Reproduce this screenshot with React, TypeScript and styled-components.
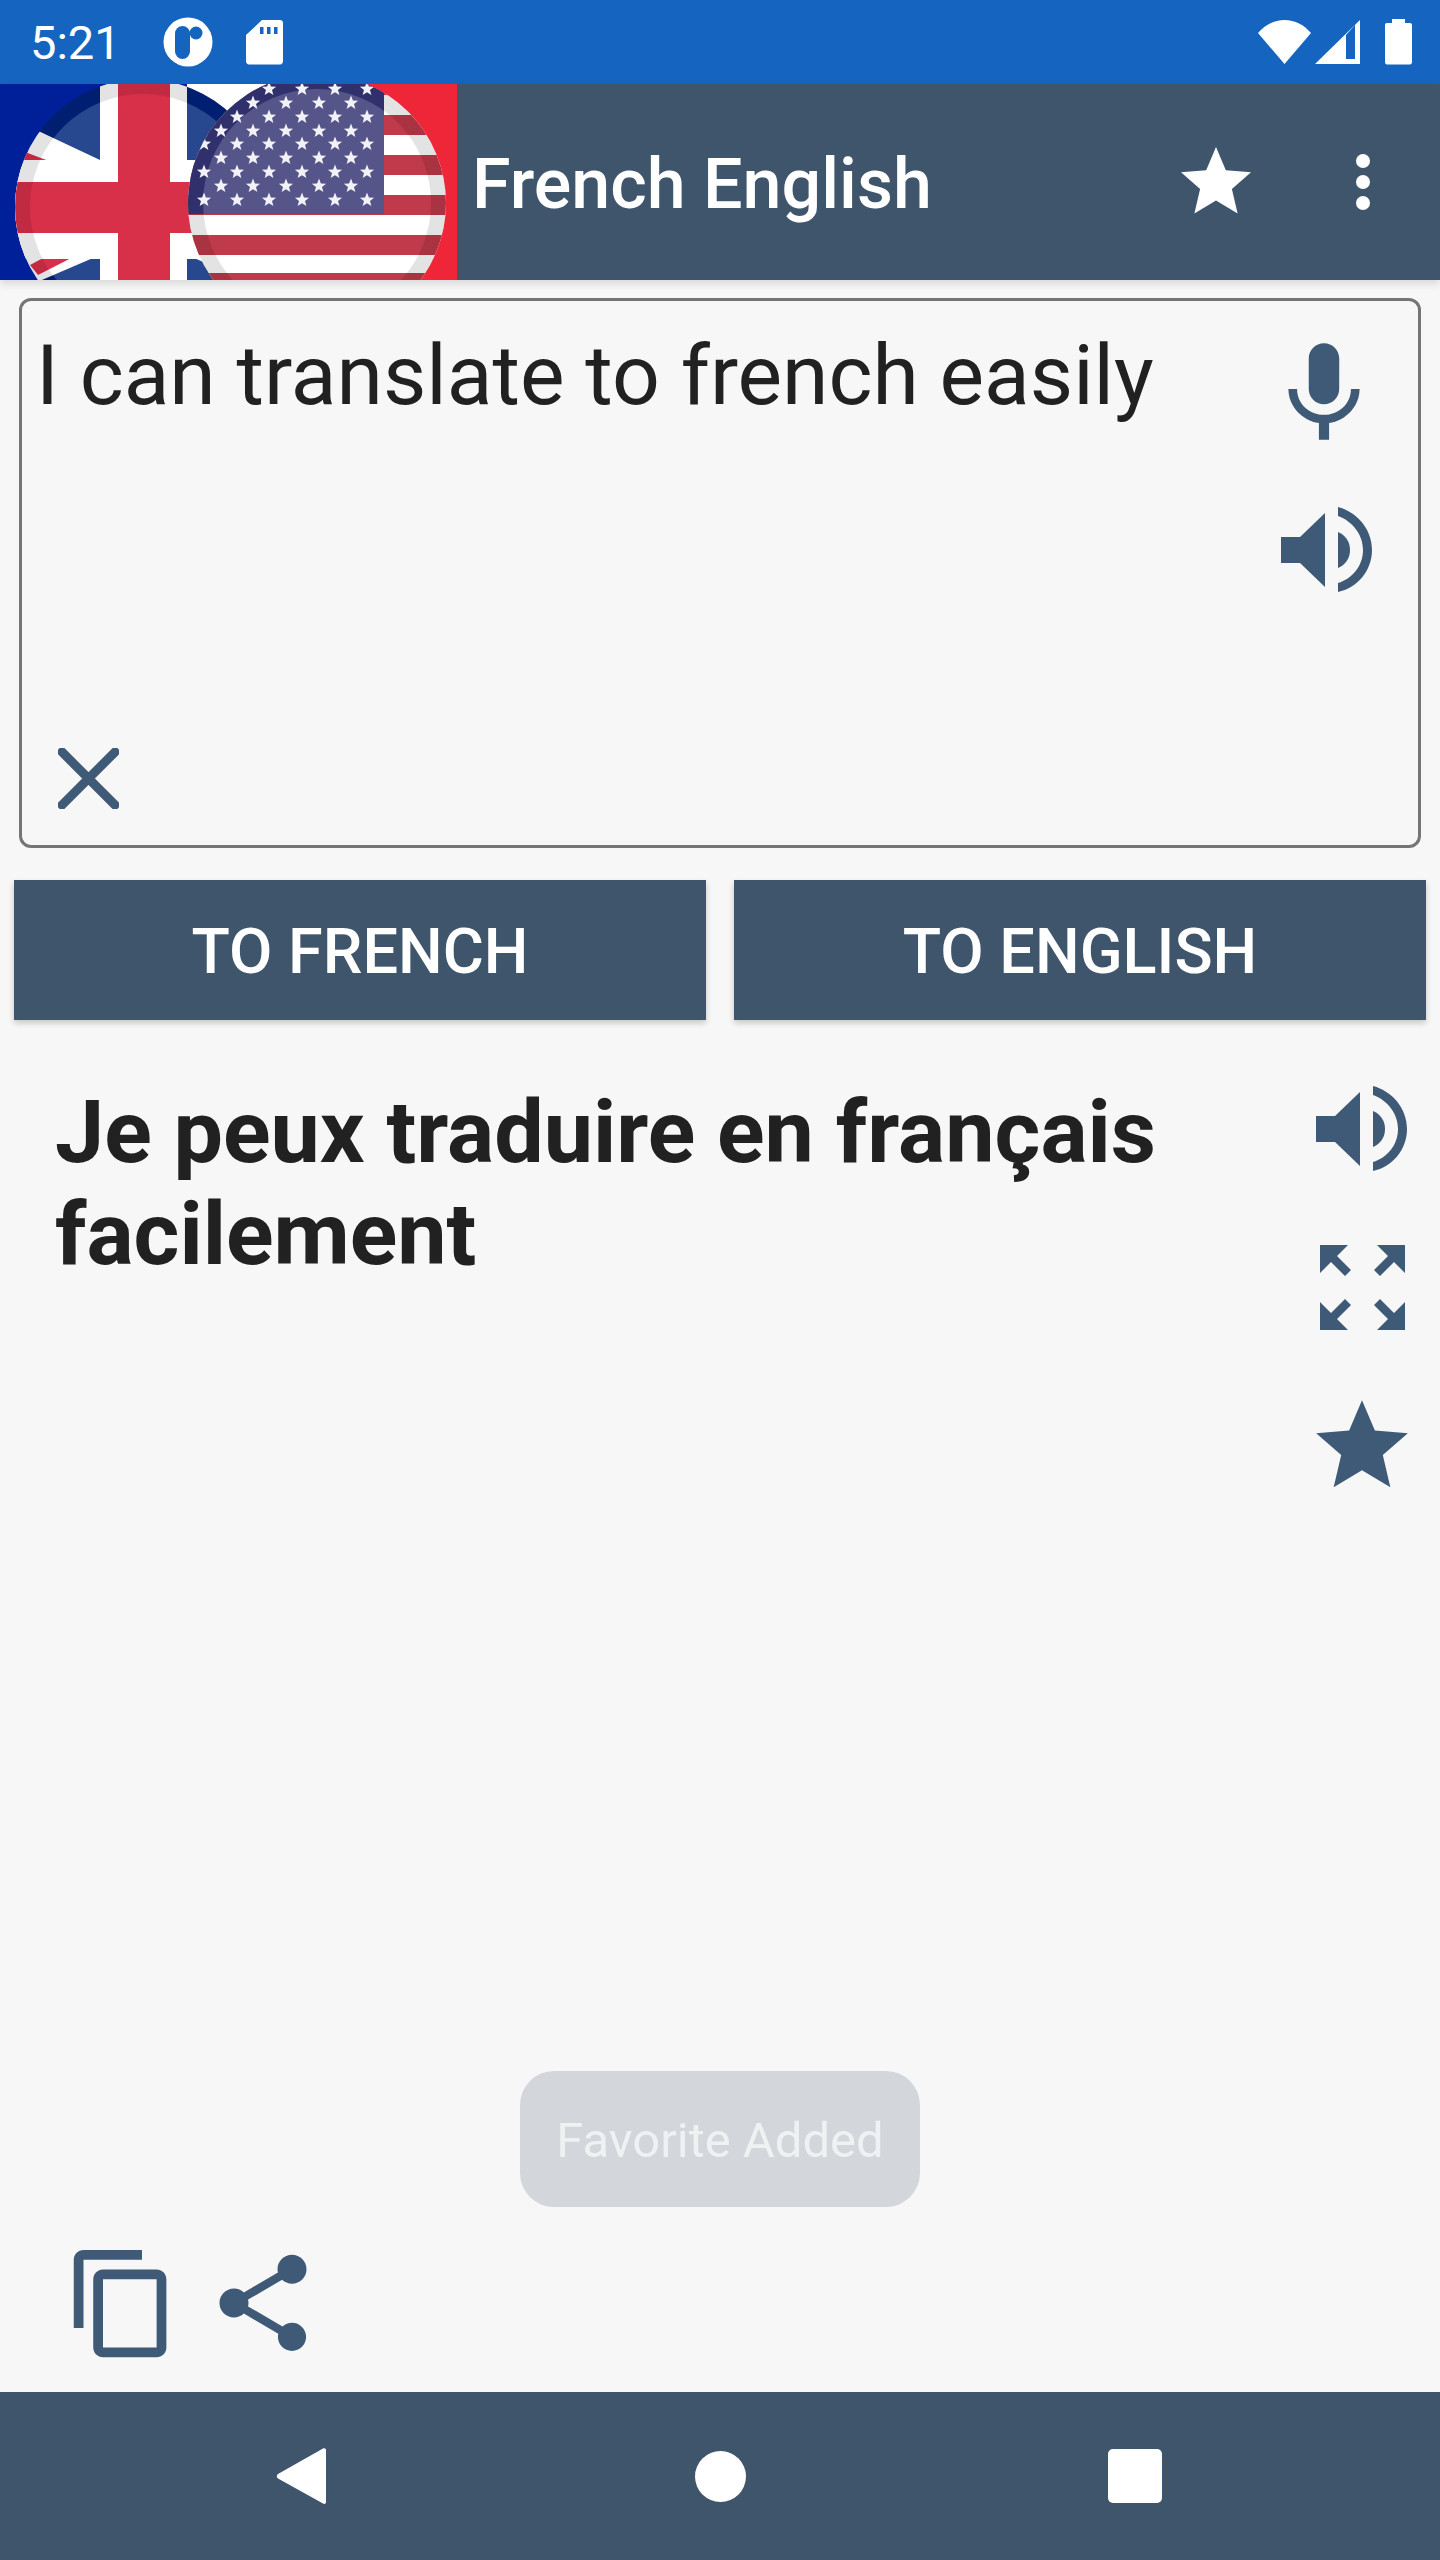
import React from 'react';
import styled, { createGlobalStyle } from 'styled-components';

const SLATE = '#3f556c';
const ICON = '#3f5a76';

const GlobalStyle = createGlobalStyle`
  html, body {
    margin: 0;
    padding: 0;
    background: #f7f7f7;
  }
  * {
    box-sizing: border-box;
  }
`;

// blue / white / red background of the logo, with the two round flags on top
const starRows = [
  { y: 5, xs: [269, 302, 335, 367] },
  { y: 19, xs: [253, 286, 319, 351] },
  { y: 33, xs: [237, 269, 302, 335, 367] },
  { y: 47, xs: [221, 253, 286, 319, 351] },
  { y: 60, xs: [204, 237, 269, 302, 335, 367] },
  { y: 74, xs: [221, 253, 286, 319, 351] },
  { y: 88, xs: [204, 237, 269, 302, 335, 367] },
  { y: 102, xs: [221, 253, 286, 319, 351] },
  { y: 116, xs: [204, 237, 269, 302, 335, 367] },
];

const starPoints = (cx: number, cy: number, r: number) => {
  const pts: string[] = [];
  for (let i = 0; i < 10; i++) {
    const rad = i % 2 === 0 ? r : r * 0.42;
    const a = (Math.PI / 5) * i - Math.PI / 2;
    pts.push(`${(cx + rad * Math.cos(a)).toFixed(1)},${(cy + rad * Math.sin(a)).toFixed(1)}`);
  }
  return pts.join(' ');
};

const FlagsLogo = () => (
  <svg width='457' height='196' viewBox='0 0 457 196'>
    <defs>
      <clipPath id='ukClip'>
        <circle cx='143' cy='123' r='128' />
      </clipPath>
      <clipPath id='usClip'>
        <circle cx='317' cy='119' r='129' />
      </clipPath>
      <clipPath id='usInner'>
        <circle cx='317' cy='119' r='114' />
      </clipPath>
    </defs>
    <rect x='0' y='0' width='187' height='196' fill='#00209a' />
    <rect x='187' y='0' width='80' height='196' fill='#ffffff' />
    <rect x='267' y='0' width='190' height='196' fill='#ef2637' />

    <g clipPath='url(#ukClip)'>
      <rect x='0' y='-20' width='300' height='290' fill='#00237f' />
      <circle cx='143' cy='123' r='113' fill='#27478f' />
      <polygon points='0,29 100,76 100,171 0,214' fill='#fff' />
      <polygon points='187,171 205,171 222,186' fill='#fff' />
      <polygon points='25,68 57,80 23,79' fill='#d9304a' />
      <polygon points='30,181 58,166 87,166 38,191' fill='#d9304a' />
      <rect x='100' y='-20' width='87' height='290' fill='#fff' />
      <rect x='0' y='76' width='300' height='99' fill='#fff' />
      <rect x='118' y='-20' width='52' height='290' fill='#d9304a' />
      <rect x='0' y='98' width='300' height='51' fill='#d9304a' />
      <circle cx='143' cy='123' r='120.5' fill='none' stroke='#000' strokeOpacity='0.11' strokeWidth='15' />
    </g>

    <g clipPath='url(#usClip)'>
      <rect x='188' y='-10' width='260' height='260' fill='#ffffff' />
      <rect x='188' y='-9' width='260' height='20' fill='#bf3a4b' />
      <rect x='188' y='31' width='260' height='20' fill='#bf3a4b' />
      <rect x='188' y='71' width='260' height='20' fill='#bf3a4b' />
      <rect x='188' y='111' width='260' height='20' fill='#bf3a4b' />
      <rect x='188' y='151' width='260' height='20' fill='#bf3a4b' />
      <rect x='188' y='189' width='260' height='10' fill='#bf3a4b' />
      <circle cx='317' cy='119' r='121.5' fill='none' stroke='#000' strokeOpacity='0.11' strokeWidth='15' />
      <rect x='188' y='-10' width='196' height='140' fill='#30306c' />
      <rect x='188' y='-10' width='196' height='140' fill='#55558a' clipPath='url(#usInner)' />
      {starRows.map((row) =>
        row.xs.map((x) => <polygon key={`${row.y}-${x}`} points={starPoints(x, row.y, 7.5)} fill='#f2f2f6' />),
      )}
    </g>
  </svg>
);

const MaterialIcon = ({ size, color, d }: { size: number; color: string; d: string }) => (
  <svg width={size} height={size} viewBox='0 0 24 24' fill={color}>
    <path d={d} />
  </svg>
);

const STAR =
  'M12 17.27L18.18 21l-1.64-7.03L22 9.24l-7.19-.61L12 2 9.19 8.63 2 9.24l5.46 4.73L5.82 21z';
const MIC =
  'M12 14c1.66 0 2.99-1.34 2.99-3L15 5c0-1.66-1.34-3-3-3S9 3.34 9 5v6c0 1.66 1.34 3 3 3zm5.3-3c0 3-2.54 5.1-5.3 5.1S6.7 14 6.7 11H5c0 3.41 2.72 6.23 6 6.72V21h2v-3.28c3.28-.48 6-3.3 6-6.72h-1.7z';
const COPY =
  'M16 1H4c-1.1 0-2 .9-2 2v14h2V3h12V1zm3 4H8c-1.1 0-2 .9-2 2v14c0 1.1.9 2 2 2h11c1.1 0 2-.9 2-2V7c0-1.1-.9-2-2-2zm0 16H8V7h11v14z';
const SHARE =
  'M18 16.08c-.76 0-1.44.3-1.96.77L8.91 12.7c.05-.23.09-.46.09-.7s-.04-.47-.09-.7l7.05-4.11c.54.5 1.25.81 2.04.81 1.66 0 3-1.34 3-3s-1.34-3-3-3-3 1.34-3 3c0 .24.04.47.09.7L8.04 9.81C7.5 9.31 6.79 9 6 9c-1.66 0-3 1.34-3 3s1.34 3 3 3c.79 0 1.5-.31 2.04-.81l7.12 4.16c-.05.21-.08.43-.08.65 0 1.61 1.31 2.92 2.92 2.92 1.61 0 2.92-1.31 2.92-2.92s-1.31-2.92-2.92-2.92z';

const SpeakerIcon = () => (
  <svg width='92' height='90' viewBox='0 0 92 90' fill={ICON}>
    <path d='M0 32H19L44 8V82L19 58H0Z' />
    <path d='M57 27C64 30 69 36 69 45C69 54 64 60 57 63Z' />
    <path d='M57 2C76 7 91 24 91 45C91 66 76 83 57 87V78C71 74 82 61 82 45C82 29 71 16 57 11Z' />
  </svg>
);

const ExpandIcon = () => {
  const arrow = 'M0 0H28L17 11L31 25L25 31L11 17L0 28Z';
  return (
    <svg width='85' height='85' viewBox='0 0 85 85' fill={ICON}>
      <path d={arrow} />
      <path d={arrow} transform='translate(85 0) scale(-1 1)' />
      <path d={arrow} transform='translate(0 85) scale(1 -1)' />
      <path d={arrow} transform='translate(85 85) scale(-1 -1)' />
    </svg>
  );
};

const CloseIcon = () => (
  <svg width='61' height='61' viewBox='0 0 61 61' stroke={ICON} strokeWidth='9' strokeLinecap='square'>
    <path d='M4 4L57 57M57 4L4 57' />
  </svg>
);

const App = () => {
  return (
    <SPage>
      <GlobalStyle />
      <SStatusBar>
        <STime>5:21</STime>
        <SStatusLeft>
          <svg width='50' height='50' viewBox='0 0 50 50'>
            <circle cx='25' cy='25' r='24.5' fill='#fff' />
            <rect x='12' y='9' width='15' height='33' rx='7.5' fill='#1565c0' />
            <circle cx='33' cy='16' r='6.5' fill='#1565c0' />
          </svg>
          <svg width='37' height='45' viewBox='0 0 37 45'>
            <path d='M16 0H34C35.7 0 37 1.3 37 3V41C37 43 35.7 44.5 34 44.5H3C1.3 44.5 0 43 0 41V15Z' fill='#fff' />
            <path d='M14 7H17.5V14H14ZM21 7H24.5V14H21ZM28 7H31.5V14H28Z' fill='#1565c0' />
          </svg>
        </SStatusLeft>
        <SStatusRight>
          <svg width='53' height='45' viewBox='0 0 53 45'>
            <path d='M0 13C7 5 16 0 26.5 0C37 0 46 5 53 13L26.5 44Z' fill='#fff' />
          </svg>
          <svg width='45' height='44' viewBox='0 0 45 44'>
            <path fillRule='evenodd' d='M45 0V44H0ZM31 15L31 39H40V5Z' fill='#fff' />
          </svg>
          <svg width='27' height='46' viewBox='0 0 27 46'>
            <path d='M7 0H20V4H25C26.2 4 27 4.8 27 6V43C27 44.6 26.2 45.5 25 45.5H2C.8 45.5 0 44.6 0 43V6C0 4.8.8 4 2 4H7Z' fill='#fff' />
          </svg>
        </SStatusRight>
      </SStatusBar>

      <SAppBar>
        <FlagsLogo />
        <STitle>French English</STitle>
        <SAppActions>
          <MaterialIcon size={84} color='#fff' d={STAR} />
          <svg width='84' height='84' viewBox='0 0 24 24' fill='#fff'>
            <circle cx='12' cy='6' r='2' />
            <circle cx='12' cy='12' r='2' />
            <circle cx='12' cy='18' r='2' />
          </svg>
        </SAppActions>
      </SAppBar>

      <SInputBox>
        <SInputMain>
          <SInputText>I can translate to french easily</SInputText>
          <CloseIcon />
        </SInputMain>
        <SInputTools>
          <MaterialIcon size={122} color={ICON} d={MIC} />
          <SpeakerIcon />
        </SInputTools>
      </SInputBox>

      <SButtons>
        <SButton>TO FRENCH</SButton>
        <SButton>TO ENGLISH</SButton>
      </SButtons>

      <SResult>
        <SResultText>Je peux traduire en français facilement</SResultText>
        <SResultTools>
          <SpeakerIcon />
          <ExpandIcon />
          <MaterialIcon size={110} color={ICON} d={STAR} />
        </SResultTools>
        <SToast>Favorite Added</SToast>
      </SResult>

      <SBottomTools>
        <MaterialIcon size={117} color={ICON} d={COPY} />
        <MaterialIcon size={116} color={ICON} d={SHARE} />
      </SBottomTools>

      <SNavBar>
        <svg width='50' height='58' viewBox='0 0 50 58'>
          <path d='M47 1.5C48.6 .6 50 1.6 50 3V55C50 56.6 48.6 57.5 47 56.6L2 31.5C.4 30.5.4 28 2 27Z' fill='#fff' />
        </svg>
        <SNavCircle />
        <SNavSquare />
      </SNavBar>
    </SPage>
  );
};

export default App;

const SPage = styled.div`
  display: flex;
  flex-direction: column;
  width: 1440px;
  height: 2560px;
  overflow: hidden;
  background: #f7f7f7;
  font-family: Roboto, 'Liberation Sans', sans-serif;
`;

const SStatusBar = styled.div`
  display: flex;
  align-items: center;
  flex: 0 0 84px;
  padding: 0 28px 0 30px;
  background: #1565c0;
  color: #fff;
`;

const STime = styled.span`
  font-size: 47px;
`;

const SStatusLeft = styled.div`
  display: flex;
  align-items: center;
  gap: 33px;
  margin-left: 42px;
`;

const SStatusRight = styled.div`
  display: flex;
  align-items: center;
  gap: 4px;
  margin-left: auto;

  svg:last-child {
    margin-left: 21px;
  }
`;

const SAppBar = styled.header`
  position: relative;
  display: flex;
  align-items: center;
  flex: 0 0 196px;
  padding-right: 35px;
  background: ${SLATE};
  box-shadow: 0 4px 8px rgba(0, 0, 0, 0.12);
  color: #fff;
`;

const STitle = styled.h1`
  margin: 4px 0 0 15px;
  font-size: 70px;
  font-weight: 500;
`;

const SAppActions = styled.div`
  display: flex;
  gap: 63px;
  margin-left: auto;
`;

const SInputBox = styled.section`
  display: flex;
  flex: 0 0 550px;
  margin: 18px 19px 0;
  padding: 0 33px 0 14px;
  border: 3px solid #757575;
  border-radius: 12px;
`;

const SInputMain = styled.div`
  display: flex;
  flex: 1;
  flex-direction: column;
  align-items: flex-start;
  padding-bottom: 36px;
`;

const SInputText = styled.div`
  flex: 1;
  padding-top: 26px;
  color: #212121;
  font-size: 84px;
  line-height: 98px;

  & + svg {
    margin-left: 22px;
  }
`;

const SInputTools = styled.div`
  display: flex;
  flex-direction: column;
  align-items: center;
  gap: 50px;
  padding-top: 32px;

  svg:last-child {
    margin-left: 6px;
  }
`;

const SButtons = styled.div`
  display: flex;
  flex: 0 0 140px;
  gap: 28px;
  margin-top: 32px;
  padding: 0 14px;
`;

const SButton = styled.button`
  flex: 1;
  padding: 3px 0 0;
  border: 0;
  background: ${SLATE};
  box-shadow: 0 3px 6px rgba(0, 0, 0, 0.2);
  color: #fff;
  font-family: inherit;
  font-size: 63px;
  font-weight: 500;
`;

const SResult = styled.section`
  position: relative;
  display: flex;
  flex: 1;
  justify-content: space-between;
  padding: 61px 23px 0 55px;
`;

const SResultText = styled.div`
  width: 1180px;
  color: #212121;
  font-size: 88px;
  font-weight: 700;
  line-height: 102px;
`;

const SResultTools = styled.div`
  display: flex;
  flex-direction: column;
  align-items: center;
  gap: 71px;
  margin-top: 3px;

  svg:last-child {
    margin-top: -10px;
  }
`;

const SToast = styled.div`
  position: absolute;
  left: 520px;
  bottom: 38px;
  display: flex;
  align-items: center;
  justify-content: center;
  width: 400px;
  height: 136px;
  padding-top: 2px;
  border-radius: 34px;
  background: #d3d6da;
  color: #f0f1f2;
  font-size: 49px;
`;

const SBottomTools = styled.div`
  display: flex;
  flex: 0 0 147px;
  gap: 24px;
  padding-left: 64px;
`;

const SNavBar = styled.nav`
  display: flex;
  align-items: center;
  justify-content: space-between;
  flex: 0 0 168px;
  padding: 0 278px 0 276px;
  background: ${SLATE};
`;

const SNavCircle = styled.div`
  width: 51px;
  height: 51px;
  margin-left: 6px;
  border-radius: 50%;
  background: #fff;
`;

const SNavSquare = styled.div`
  width: 54px;
  height: 54px;
  border-radius: 5px;
  background: #fff;
`;
